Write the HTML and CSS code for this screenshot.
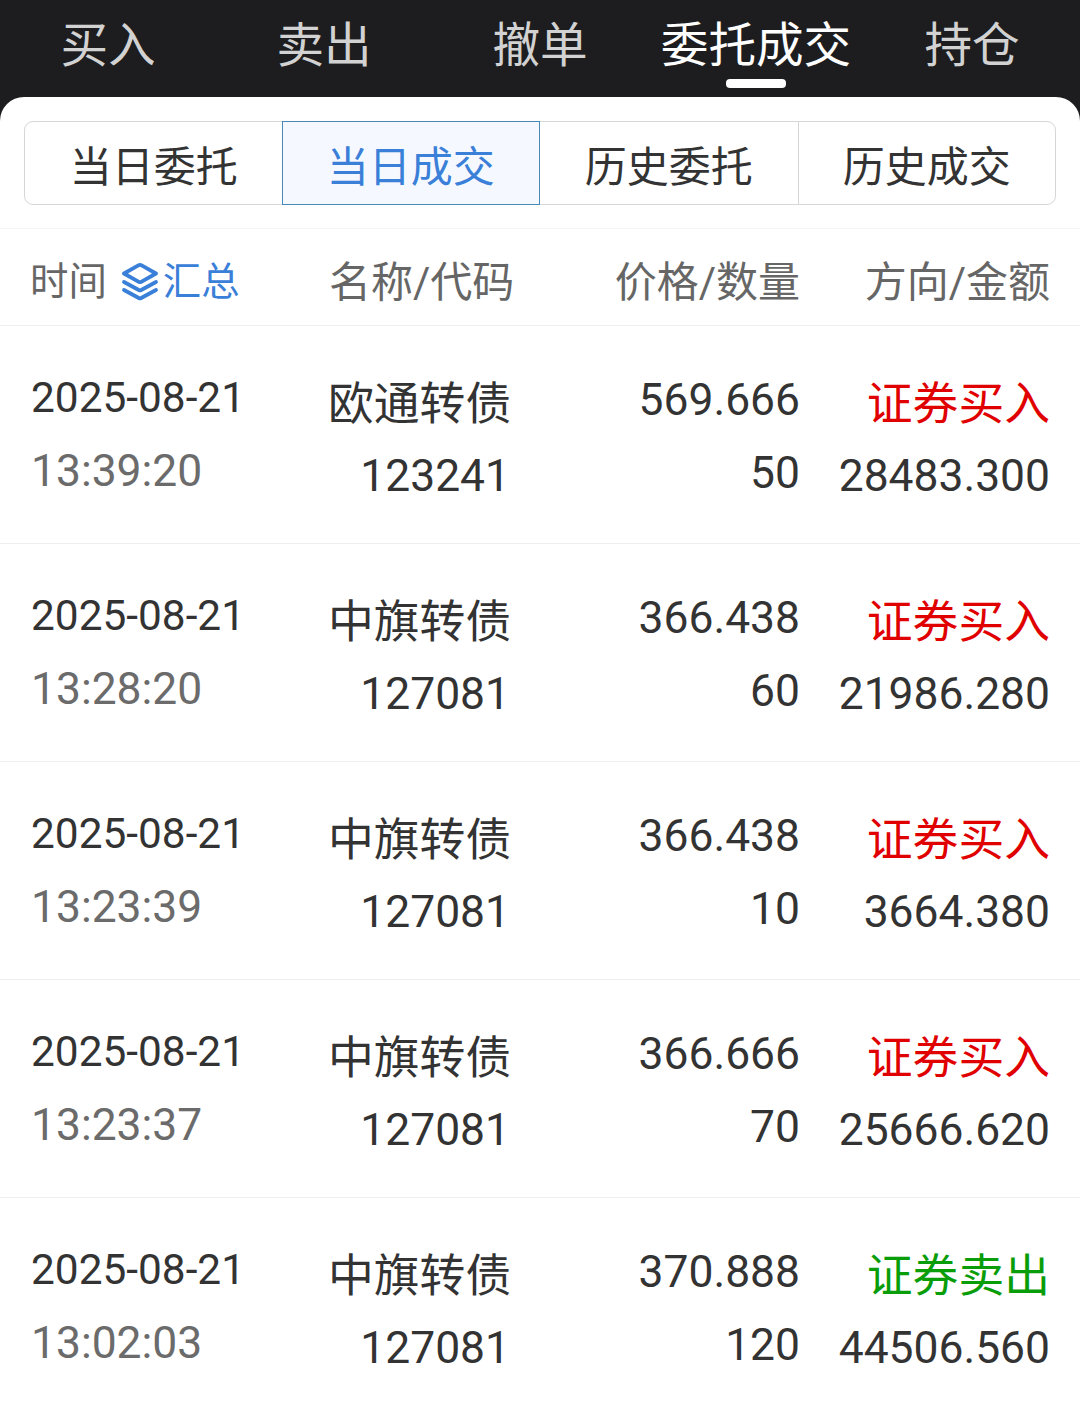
FILE: index.html
```
<!DOCTYPE html>
<html lang="zh-CN">
<head>
    <meta charset="UTF-8">
    <meta name="viewport" content="width=device-width, initial-scale=1.0">
    <title>委托成交</title>
    <link rel="stylesheet" href="styles.css">
</head>
<body>
    <nav class="top-nav">
        <a class="nav-item">买入</a>
        <a class="nav-item">卖出</a>
        <a class="nav-item">撤单</a>
        <a class="nav-item active">委托成交</a>
        <a class="nav-item">持仓</a>
    </nav>

    <main class="panel">
        <div class="tabs">
            <div class="tab">当日委托</div>
            <div class="tab active">当日成交</div>
            <div class="tab">历史委托</div>
            <div class="tab">历史成交</div>
        </div>

        <div class="table-head">
            <div class="head-time">
                <span>时间</span>
                <svg class="layers" width="38" height="38" viewBox="0 0 38 38" fill="none" stroke="#3a80d8" stroke-width="3.8" stroke-linejoin="round" stroke-linecap="round">
                    <path d="M17.8 2.2 Q19 1.6 20.2 2.2 L35 10.5 L20.2 18.9 Q19 19.5 17.8 18.9 L3 10.5 Z"/>
                    <path d="M3 19 L17.8 27 Q19 27.6 20.2 27 L35 19"/>
                    <path d="M3 27 L17.8 35 Q19 35.6 20.2 35 L35 27"/>
                </svg>
                <span class="summary">汇总</span>
            </div>
            <div class="head-name">名称/代码</div>
            <div class="head-price">价格/数量</div>
            <div class="head-side">方向/金额</div>
        </div>

        <div class="row">
            <div class="col-time"><p class="date">2025-08-21</p><p class="clock">13:39:20</p></div>
            <div class="col-name"><p class="cn">欧通转债</p><p class="code">123241</p></div>
            <div class="col-price"><p>569.666</p><p>50</p></div>
            <div class="col-side"><p class="cn buy">证券买入</p><p>28483.300</p></div>
        </div>
        <div class="row">
            <div class="col-time"><p class="date">2025-08-21</p><p class="clock">13:28:20</p></div>
            <div class="col-name"><p class="cn">中旗转债</p><p class="code">127081</p></div>
            <div class="col-price"><p>366.438</p><p>60</p></div>
            <div class="col-side"><p class="cn buy">证券买入</p><p>21986.280</p></div>
        </div>
        <div class="row">
            <div class="col-time"><p class="date">2025-08-21</p><p class="clock">13:23:39</p></div>
            <div class="col-name"><p class="cn">中旗转债</p><p class="code">127081</p></div>
            <div class="col-price"><p>366.438</p><p>10</p></div>
            <div class="col-side"><p class="cn buy">证券买入</p><p>3664.380</p></div>
        </div>
        <div class="row">
            <div class="col-time"><p class="date">2025-08-21</p><p class="clock">13:23:37</p></div>
            <div class="col-name"><p class="cn">中旗转债</p><p class="code">127081</p></div>
            <div class="col-price"><p>366.666</p><p>70</p></div>
            <div class="col-side"><p class="cn buy">证券买入</p><p>25666.620</p></div>
        </div>
        <div class="row">
            <div class="col-time"><p class="date">2025-08-21</p><p class="clock">13:02:03</p></div>
            <div class="col-name"><p class="cn">中旗转债</p><p class="code">127081</p></div>
            <div class="col-price"><p>370.888</p><p>120</p></div>
            <div class="col-side"><p class="cn sell">证券卖出</p><p>44506.560</p></div>
        </div>
    </main>
</body>
</html>
```
FILE: styles.css
```
* {
    box-sizing: border-box;
    margin: 0;
    padding: 0;
}
body {
    height: 1408px;
    overflow: hidden;
    background-color: #1d1d1f;
    color: #333;
    font-family: Roboto, "Noto Sans CJK SC", sans-serif;
}

/* Top navigation */
.top-nav {
    display: grid;
    grid-template-columns: repeat(5, 1fr);
    height: 97px;
}
.nav-item {
    position: relative;
    color: #d2d2d2;
    font-size: 47.6px;
    line-height: 92px;
    text-align: center;
    white-space: nowrap;
}
.nav-item.active {
    color: #fff;
}
.nav-item.active::after {
    content: "";
    position: absolute;
    left: 50%;
    top: 79px;
    width: 60px;
    height: 9px;
    margin-left: -30px;
    border-radius: 4px;
    background-color: #fff;
}

.panel {
    height: 1311px;
    padding-top: 24px;
    border-radius: 24px 24px 0 0;
    background-color: #fff;
}

/* Segmented tabs */
.tabs {
    display: grid;
    grid-template-columns: repeat(4, 1fr);
    height: 84px;
    margin: 0 24px 23px;
    border: 1px solid #d6d6d6;
    border-radius: 9px;
}
.tab {
    height: 82px;
    font-size: 42px;
    line-height: 92px;
    text-align: center;
}
.tab + .tab {
    border-left: 1px solid #d6d6d6;
}
.tab.active {
    height: 84px;
    margin: -1px 0 -1px -1px;
    border: 1px solid #4a88b8;
    background-color: #f5f9ff;
    color: #3a80d8;
}
.tab.active + .tab {
    border-left: 0;
}

/* Table */
.table-head,
.row {
    display: grid;
    grid-template-columns: 297px 182px 290px 250px;
    padding: 0 30px 0 31px;
    border-bottom: 1px solid #eee;
    white-space: nowrap;
}
.table-head {
    height: 98px;
    border-top: 1px solid #f5f5f5;
    color: #666;
    font-size: 42px;
    line-height: 107px;
}
.head-time {
    display: flex;
    align-items: center;
    height: 105px;
    margin-left: -1px;
    font-size: 38.4px;
}
.layers {
    margin: 0 4px 0 14px;
}
.summary {
    color: #3a80d8;
}
.head-name {
    padding-left: 1px;
}
.head-price,
.head-side,
.col-price,
.col-side {
    text-align: right;
}
.row {
    height: 218px;
    padding-top: 36px;
    font-size: 44.4px;
    line-height: 73px;
}
.date {
    height: 73px;
    font-size: 42.4px;
    line-height: 72px;
}
.clock {
    color: #6b6b6b;
}
.cn {
    height: 73px;
    font-size: 45.8px;
    line-height: 75px;
}
.code {
    text-align: right;
}
.col-name,
.col-side {
    padding-top: 5px;
}
.col-price {
    padding-top: 2px;
}
.buy {
    color: #e00000;
}
.sell {
    color: #0a9d0a;
}
```
